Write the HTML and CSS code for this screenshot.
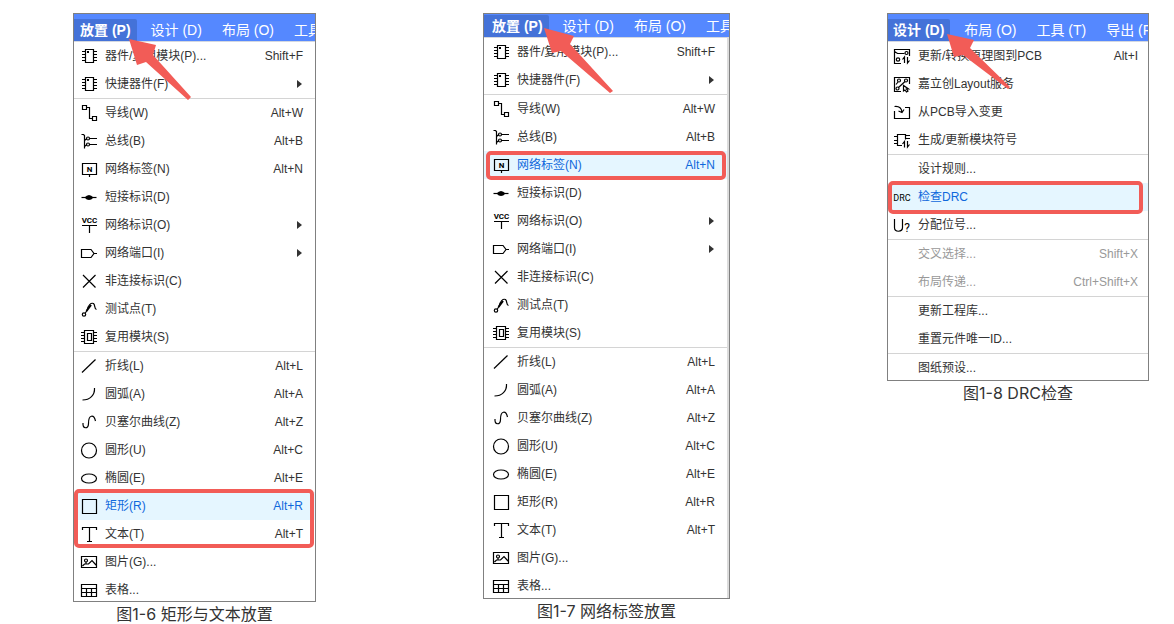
FILE: index.html
```html
<!DOCTYPE html>
<html lang="zh-CN">
<head>
  <meta charset="UTF-8">
  <meta name="viewport" content="width=device-width, initial-scale=1.0">
  <title>原理图菜单</title>
  <link rel="stylesheet" href="styles.css">
</head>
<body>
  <!-- 图标 -->
  <svg class="sprite" aria-hidden="true">
    <symbol id="i-chip" viewBox="0 0 16 16"><path d="M4.5 1.5h8v13h-8zM1 3.5h3.5M1 6.5h3.5M1 9.5h3.5M1 12.5h3.5M12.5 3.5H16M12.5 6.5H16M12.5 9.5H16M12.5 12.5H16"/><path class="solid" d="M6 3h2v2H6z"/></symbol>
    <symbol id="i-wire" viewBox="0 0 16 16"><path d="M1.5.5h4v4h-4zM5.5 2.5h3v11h3M11.5 11.5h4v4h-4z"/></symbol>
    <symbol id="i-bus" viewBox="0 0 16 16"><path d="M.5 1.5h2l1 1v13M3.500 7.500l2.500-2M3.500 13.500l2.500-2M8.500 5.500h7.500M8.500 11.500h7.500"/><circle cx="7" cy="5.500" r="1.500"/><circle cx="7" cy="11.500" r="1.500"/></symbol>
    <symbol id="i-label" viewBox="0 0 16 16"><path d="M1.5 2.5h14v11h-14zM8.5 13.5V16"/><text x="8.5" y="11" font-size="8">N</text></symbol>
    <symbol id="i-short" viewBox="0 0 16 16"><path d="M.5 8.5h15"/><path class="solid" d="M3.500 8.500Q8 3.500 12.500 8.500Q8 13.500 3.500 8.500z"/></symbol>
    <symbol id="i-vcc" viewBox="0 0 16 16"><text x="8.5" y="6" font-size="8">VCC</text><path d="M1 8.5h15M8.5 8.5V16"/></symbol>
    <symbol id="i-port" viewBox="0 0 16 16"><path d="M.5 4.5H10l3 4-3 4H.5zM13 8.5h3"/></symbol>
    <symbol id="i-nc" viewBox="0 0 16 16"><path d="M2 2l12.500 12.500M14.500 2L2 14.500"/></symbol>
    <symbol id="i-test" viewBox="0 0 16 16"><circle cx="3" cy="13.5" r="1.7"/><path d="M4.3 12L6 9.5C7 4 10 1.500 12.500 2.500C14.500 4 13 8 15.500 8.500"/><path class="thick" d="M5.500 10L10 4"/></symbol>
    <symbol id="i-block" viewBox="0 0 16 16"><path d="M3.5 1.5h9v13h-9zM6.500 4.500h4v7h-4zM0 3.500h3.500M0 6.500h3.500M0 9.500h3.500M0 12.500h3.500M12.500 3.500H16M12.500 6.500H16M12.500 9.500H16M12.500 12.500H16"/></symbol>
    <symbol id="i-line" viewBox="0 0 16 16"><path d="M1 14.5L14.5 1.5"/></symbol>
    <symbol id="i-arc" viewBox="0 0 16 16"><path d="M1.5 14C9 14 14 9 13.5 2"/></symbol>
    <symbol id="i-bezier" viewBox="0 0 16 16"><path d="M2 9C1.5 15 7.5 15.5 7.5 9.5C7.5 0 13 .5 14.5 7"/></symbol>
    <symbol id="i-circle" viewBox="0 0 16 16"><circle cx="8" cy="8.5" r="7.5"/></symbol>
    <symbol id="i-ellipse" viewBox="0 0 16 16"><ellipse cx="8" cy="8.5" rx="7.5" ry="4.5"/></symbol>
    <symbol id="i-rect" viewBox="0 0 16 16"><path d="M1.5 1.5h14v14h-14z"/></symbol>
    <symbol id="i-text" viewBox="0 0 16 16"><path d="M1.5 4V1.5h14V4M8.5 1.5v14M6 15.5h5"/></symbol>
    <symbol id="i-image" viewBox="0 0 16 16"><path d="M.5 2.5h15v11H.5zM1.500 12L3.500 10h4l3.500-3.500L15 11M5 8v2"/><circle cx="5" cy="6.500" r="1.500"/></symbol>
    <symbol id="i-table" viewBox="0 0 16 16"><path d="M.5 2.5h15v12H.5zM.5 6.5h15M.5 10.5h15M5.5 6.5v8M10.5 6.5v8"/></symbol>
    <symbol id="i-sync" viewBox="0 0 16 16"><path d="M.5 8V1.500h15V8M.5 3.500l3 2h7M.5 8v7.500H7M10.500 15v-6l-2 2.500M13.500 9v6l2-2.500"/><circle cx="12.500" cy="5" r="1.500"/><circle cx="4" cy="11.500" r="1.700"/></symbol>
    <symbol id="i-layout" viewBox="0 0 16 16"><path d="M.5 8V1.500h15V8M.5 8v7.500H7M4.500 11.500l6.500-6M2 8.500l2-2.500"/><circle cx="5" cy="4.500" r="1.500"/><circle cx="12" cy="4.500" r="1.500"/><circle cx="3.500" cy="12.500" r="1.500"/><path d="M9.500 9.500v5.500l1.500-1 1.500 2 1.500-1-1.500-2h2z"/></symbol>
    <symbol id="i-import" viewBox="0 0 16 16"><path d="M.5 7v7.5h15v-11H11M.5 2.5C5 2 7.500 4.500 8 8M10 5.500L8 8.500 4.500 7"/></symbol>
    <symbol id="i-symbol" viewBox="0 0 16 16"><path d="M8 13.500H3.500v-11h8v5M0 4.500h3.500M0 8.500h3.500M0 11.500h3.500M11.500 3.500H16M11.500 6.500H16M10.500 15.500v-6l-2 2.500M13.500 9v6l2-2.500"/></symbol>
    <symbol id="i-drc" viewBox="0 0 16 16"><text class="thin" x="8" y="12" font-size="9">DRC</text></symbol>
    <symbol id="i-unit" viewBox="0 0 16 16"><path d="M.5 2v8.500c0 5 8 5 8 0V2"/><text class="thin" x="13" y="15" font-size="12">?</text></symbol>
  </svg>

  <main class="figures">
    <figure class="fig-shapes">
      <div class="panel">
        <nav class="menubar">
          <button class="active">放置 (P)</button>
          <button>设计 (D)</button>
          <button>布局 (O)</button>
          <button>工具 (T)</button>
        </nav>
        <div class="menu">
          <ul>
            <li><button><svg><use href="#i-chip"/></svg>器件/复用模块(P)...<kbd>Shift+F</kbd></button></li>
            <li><button class="more"><svg><use href="#i-chip"/></svg>快捷器件(F)</button></li>
          </ul>
          <ul>
            <li><button><svg><use href="#i-wire"/></svg>导线(W)<kbd>Alt+W</kbd></button></li>
            <li><button><svg><use href="#i-bus"/></svg>总线(B)<kbd>Alt+B</kbd></button></li>
            <li><button><svg><use href="#i-label"/></svg>网络标签(N)<kbd>Alt+N</kbd></button></li>
            <li><button><svg><use href="#i-short"/></svg>短接标识(D)</button></li>
            <li><button class="more"><svg><use href="#i-vcc"/></svg>网络标识(O)</button></li>
            <li><button class="more"><svg><use href="#i-port"/></svg>网络端口(I)</button></li>
            <li><button><svg><use href="#i-nc"/></svg>非连接标识(C)</button></li>
            <li><button><svg><use href="#i-test"/></svg>测试点(T)</button></li>
            <li><button><svg><use href="#i-block"/></svg>复用模块(S)</button></li>
          </ul>
          <ul>
            <li><button><svg><use href="#i-line"/></svg>折线(L)<kbd>Alt+L</kbd></button></li>
            <li><button><svg><use href="#i-arc"/></svg>圆弧(A)<kbd>Alt+A</kbd></button></li>
            <li><button><svg><use href="#i-bezier"/></svg>贝塞尔曲线(Z)<kbd>Alt+Z</kbd></button></li>
            <li><button><svg><use href="#i-circle"/></svg>圆形(U)<kbd>Alt+C</kbd></button></li>
            <li><button><svg><use href="#i-ellipse"/></svg>椭圆(E)<kbd>Alt+E</kbd></button></li>
            <li class="marked"><button class="selected"><svg><use href="#i-rect"/></svg>矩形(R)<kbd>Alt+R</kbd></button></li>
            <li><button><svg><use href="#i-text"/></svg>文本(T)<kbd>Alt+T</kbd></button></li>
            <li><button><svg><use href="#i-image"/></svg>图片(G)...</button></li>
            <li><button><svg><use href="#i-table"/></svg>表格...</button></li>
          </ul>
        </div>
        <svg class="arrow" viewBox="0 0 70 66"><path d="M0 0L27 6 24 16 62 58 59 61 17 23 8 26z"/></svg>
      </div>
      <figcaption>图1-6 矩形与文本放置</figcaption>
    </figure>

    <figure class="fig-label">
      <div class="panel">
        <nav class="menubar">
          <button class="active">放置 (P)</button>
          <button>设计 (D)</button>
          <button>布局 (O)</button>
          <button>工具 (T)</button>
        </nav>
        <div class="menu">
          <ul>
            <li><button><svg><use href="#i-chip"/></svg>器件/复用模块(P)...<kbd>Shift+F</kbd></button></li>
            <li><button class="more"><svg><use href="#i-chip"/></svg>快捷器件(F)</button></li>
          </ul>
          <ul>
            <li><button><svg><use href="#i-wire"/></svg>导线(W)<kbd>Alt+W</kbd></button></li>
            <li><button><svg><use href="#i-bus"/></svg>总线(B)<kbd>Alt+B</kbd></button></li>
            <li class="marked"><button class="selected"><svg><use href="#i-label"/></svg>网络标签(N)<kbd>Alt+N</kbd></button></li>
            <li><button><svg><use href="#i-short"/></svg>短接标识(D)</button></li>
            <li><button class="more"><svg><use href="#i-vcc"/></svg>网络标识(O)</button></li>
            <li><button class="more"><svg><use href="#i-port"/></svg>网络端口(I)</button></li>
            <li><button><svg><use href="#i-nc"/></svg>非连接标识(C)</button></li>
            <li><button><svg><use href="#i-test"/></svg>测试点(T)</button></li>
            <li><button><svg><use href="#i-block"/></svg>复用模块(S)</button></li>
          </ul>
          <ul>
            <li><button><svg><use href="#i-line"/></svg>折线(L)<kbd>Alt+L</kbd></button></li>
            <li><button><svg><use href="#i-arc"/></svg>圆弧(A)<kbd>Alt+A</kbd></button></li>
            <li><button><svg><use href="#i-bezier"/></svg>贝塞尔曲线(Z)<kbd>Alt+Z</kbd></button></li>
            <li><button><svg><use href="#i-circle"/></svg>圆形(U)<kbd>Alt+C</kbd></button></li>
            <li><button><svg><use href="#i-ellipse"/></svg>椭圆(E)<kbd>Alt+E</kbd></button></li>
            <li><button><svg><use href="#i-rect"/></svg>矩形(R)<kbd>Alt+R</kbd></button></li>
            <li><button><svg><use href="#i-text"/></svg>文本(T)<kbd>Alt+T</kbd></button></li>
            <li><button><svg><use href="#i-image"/></svg>图片(G)...</button></li>
            <li><button><svg><use href="#i-table"/></svg>表格...</button></li>
          </ul>
        </div>
        <svg class="arrow" viewBox="0 0 70 66"><path d="M0 0L30 8 26 16 69 63 66 65 17 23 8 25z"/></svg>
      </div>
      <figcaption>图1-7 网络标签放置</figcaption>
    </figure>

    <figure class="fig-drc">
      <div class="panel">
        <nav class="menubar">
          <button class="active">设计 (D)</button>
          <button>布局 (O)</button>
          <button>工具 (T)</button>
          <button>导出 (F)</button>
        </nav>
        <div class="menu">
          <ul>
            <li><button><svg><use href="#i-sync"/></svg>更新/转换原理图到PCB<kbd>Alt+I</kbd></button></li>
            <li><button><svg><use href="#i-layout"/></svg>嘉立创Layout服务</button></li>
            <li><button><svg><use href="#i-import"/></svg>从PCB导入变更</button></li>
            <li><button><svg><use href="#i-symbol"/></svg>生成/更新模块符号</button></li>
          </ul>
          <ul>
            <li><button><svg></svg>设计规则...</button></li>
            <li class="marked"><button class="selected"><svg><use href="#i-drc"/></svg>检查DRC</button></li>
            <li><button><svg><use href="#i-unit"/></svg>分配位号...</button></li>
          </ul>
          <ul>
            <li><button disabled><svg></svg>交叉选择...<kbd>Shift+X</kbd></button></li>
            <li><button disabled><svg></svg>布局传递...<kbd>Ctrl+Shift+X</kbd></button></li>
          </ul>
          <ul>
            <li><button><svg></svg>更新工程库...</button></li>
            <li><button><svg></svg>重置元件唯一ID...</button></li>
          </ul>
          <ul>
            <li><button><svg></svg>图纸预设...</button></li>
          </ul>
        </div>
        <svg class="arrow" viewBox="0 0 70 66"><path d="M0 0L27 6 23 14 63 53 61 55 16 21 7 23z"/></svg>
      </div>
      <figcaption>图1-8 DRC检查</figcaption>
    </figure>
  </main>
</body>
</html>
```
FILE: styles.css
```css
* { box-sizing:border-box; }
body { margin:0; background:#fff; color:#333; font-family:"Liberation Sans", "Noto Sans CJK SC", sans-serif; }
button { font:inherit; color:inherit; background:none; border:none; padding:0; margin:0; cursor:pointer; white-space:nowrap; }
.sprite { display:none; }

.figures { display:grid; grid-template-columns:243fr 167fr 247fr 157fr 262fr; align-items:start; padding:13px 25px 0 73px; }
figure { margin:0; min-width:0; }
.fig-shapes { --edge:7px; --bar-top:5px; --right:12px; --crop:-3px; grid-column:1; }
.fig-label { --edge:9px; --bar-top:1px; --right:12px; --crop:-2px; grid-column:3; }
.fig-drc { --edge:6px; --bar-top:5px; --right:10px; --crop:-2px; grid-column:5; }
figcaption { padding-top:2px; font:16px/20px Inter, "Noto Sans CJK SC", sans-serif; text-align:center; }

.panel { position:relative; border:1px solid #808080; overflow:hidden; }
.menubar { display:flex; gap:8px; padding:var(--bar-top) 0 0 calc(var(--edge) - 7px); background:#5588ff; color:#fff; overflow:hidden; }
.menubar button { flex:none; height:22px; padding:0 6px; font-size:14px; line-height:22px; }
.menubar .active { background:#4472d8; font-weight:bold; border-radius:0 2px 0 0; }
.fig-label .active { margin-left:-2px; padding-left:8px; }
.fig-drc .active { padding-left:5px; }

.menu { border-top:1px solid #d4d8e0; margin-bottom:var(--crop); }
.fig-label .menu { border-right:2px solid #dcdcdc; }
.menu ul { list-style:none; margin:0; padding:0; }
.menu ul + ul { border-top:1px solid #d4d4d4; }
.menu li { position:relative; }
.menu button { display:flex; align-items:center; width:100%; height:28px; padding:0 var(--right) 0 var(--edge); font-size:12px; line-height:28px; text-align:left; }
.menu svg { flex:none; width:16px; height:16px; margin-right:8px; overflow:visible; }
.menu kbd { margin-left:auto; font:inherit; }
.menu .selected { background:#e5f6ff; color:#0f68dc; }
.menu button:disabled { color:#999; }
.more::after { content:""; margin-left:auto; margin-right:1px; border:4px solid transparent; border-left:5px solid #333; border-right:none; }

symbol { overflow:visible; }
symbol path, symbol circle, symbol ellipse { fill:none; stroke:#000; stroke-width:1.2; }
symbol .solid { fill:#000; stroke:none; }
symbol .thick { stroke-width:2; }
symbol text { fill:#000; font-family:Roboto, sans-serif; font-weight:bold; text-anchor:middle; }
symbol .thin { font-weight:normal; }

/* 红框标注 */
.marked::after { content:""; position:absolute; z-index:1; border:4px solid #f25c57; border-radius:5px; pointer-events:none; }
.fig-shapes .marked::after { inset:-3px 1px -28px 0; }
.fig-label .marked::after { inset:0 1px -1px 2px; }
.fig-drc .marked::after { inset:-2px 5px -3px 0; }
.arrow { position:absolute; width:70px; height:66px; fill:#f25c57; pointer-events:none; }
.fig-shapes .arrow { left:55px; top:25px; }
.fig-label .arrow { left:60px; top:14px; }
.fig-drc .arrow { left:59px; top:20px; }
```
